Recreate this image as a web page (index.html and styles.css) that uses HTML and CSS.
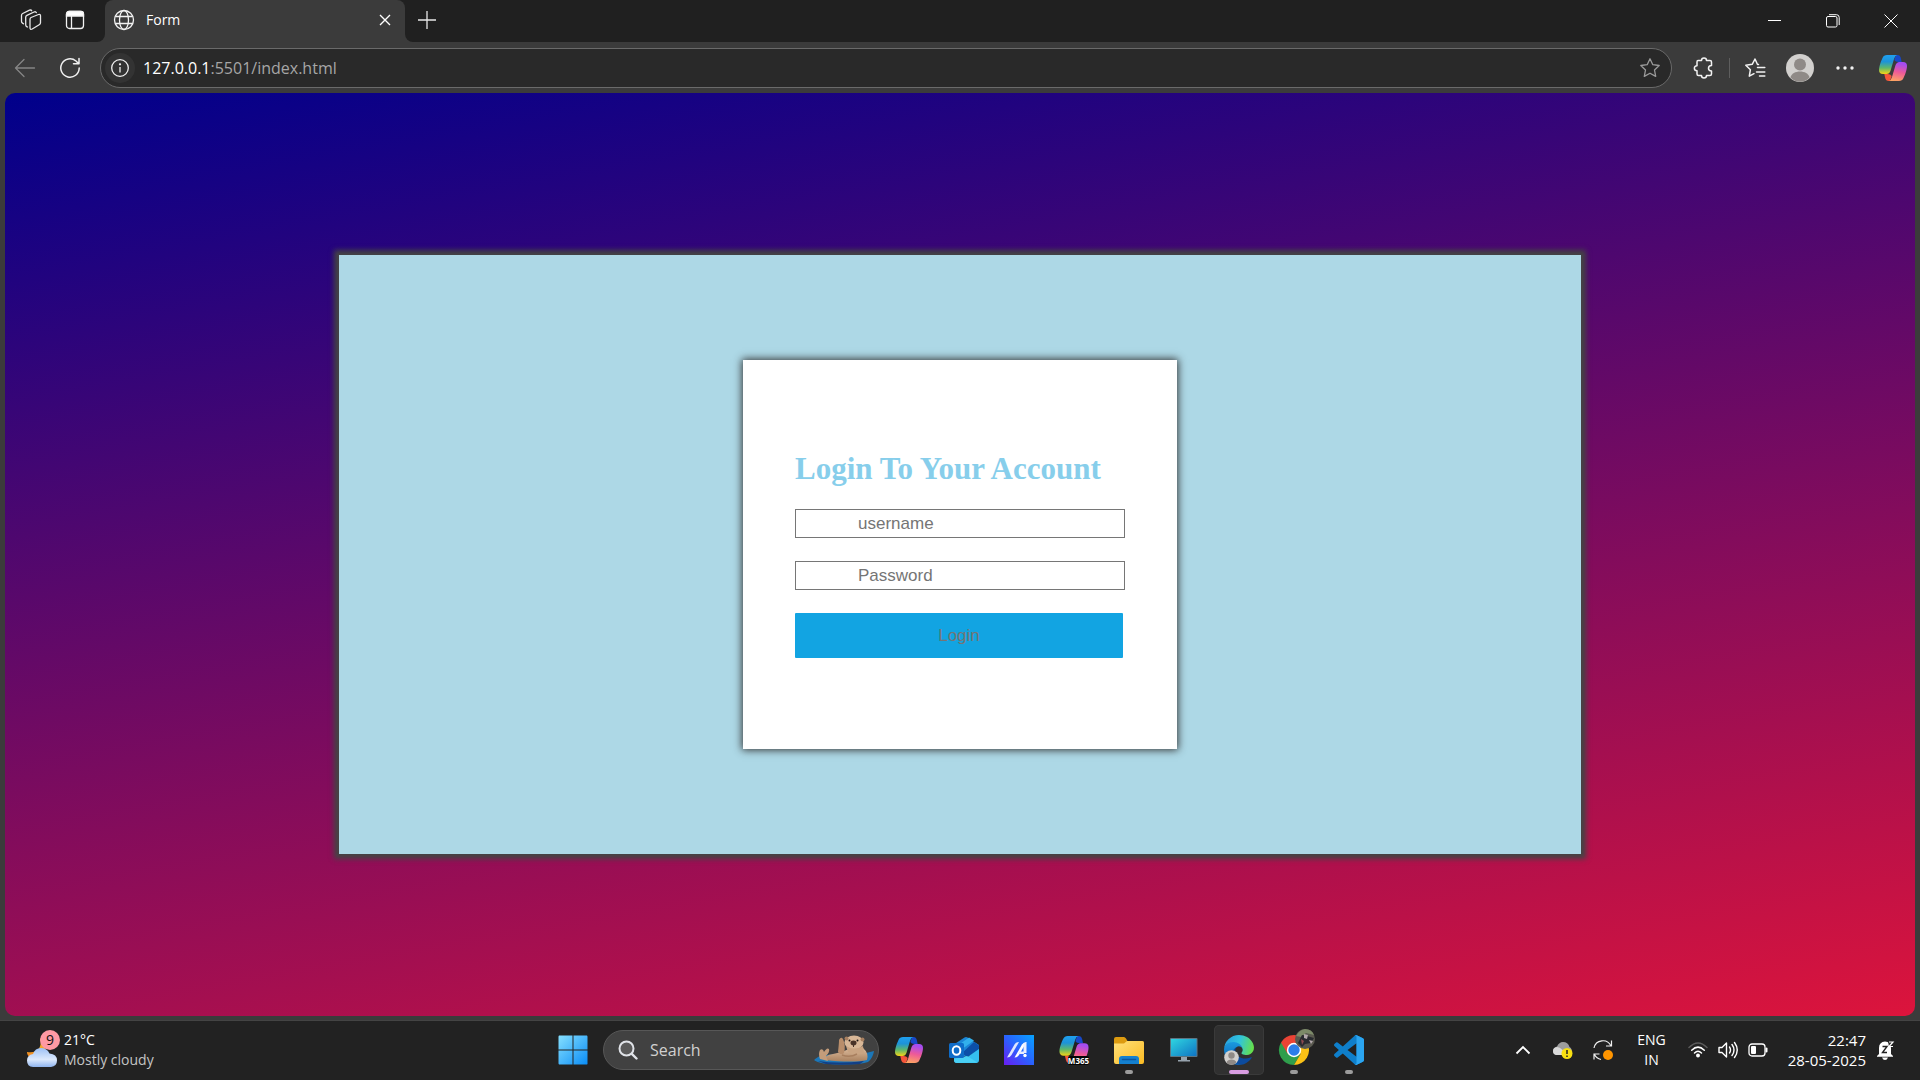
FILE: index.html
```html
<!DOCTYPE html>
<html lang="en">
<head>
<meta charset="utf-8">
<title>Form</title>
<link rel="stylesheet" href="styles.css">
</head>
<body>
<svg class="defs" aria-hidden="true">
  <defs>
    <linearGradient id="cp-left" x1="0" y1="0" x2="0" y2="1">
      <stop offset="0" stop-color="#1fa0f0"/><stop offset=".35" stop-color="#1d93d8"/><stop offset=".68" stop-color="#5fb86a"/><stop offset="1" stop-color="#f5d416"/>
    </linearGradient>
    <linearGradient id="cp-right" x1=".2" y1="0" x2="0" y2="1">
      <stop offset="0" stop-color="#a54cf0"/><stop offset=".45" stop-color="#ee5a98"/><stop offset="1" stop-color="#ffad5c"/>
    </linearGradient>
    <linearGradient id="win" x1="0" y1="0" x2="1" y2="1"><stop offset="0" stop-color="#86e0ff"/><stop offset="1" stop-color="#0a8cf5"/></linearGradient>
    <linearGradient id="asus" x1="0" y1="1" x2="1" y2="0"><stop offset="0" stop-color="#6a1cf2"/><stop offset=".5" stop-color="#2a62ff"/><stop offset="1" stop-color="#06a4ff"/></linearGradient>
    <linearGradient id="folder" x1="0" y1="0" x2="1" y2="1"><stop offset="0" stop-color="#ffe07a"/><stop offset="1" stop-color="#fbbb22"/></linearGradient>
    <linearGradient id="screen" x1="0" y1="0" x2="1" y2="1"><stop offset="0" stop-color="#2fd5e0"/><stop offset="1" stop-color="#0f74c4"/></linearGradient>
    <linearGradient id="edge-top" x1="0" y1=".3" x2="1" y2=".5"><stop offset="0" stop-color="#279fe0"/><stop offset=".5" stop-color="#31c4dc"/><stop offset="1" stop-color="#66e04a"/></linearGradient>
    <linearGradient id="edge-mid" x1="0" y1="0" x2="0" y2="1"><stop offset="0" stop-color="#1b9de2"/><stop offset="1" stop-color="#0b5cb0"/></linearGradient>
    <linearGradient id="cloud" x1="0" y1="0" x2="0" y2="1"><stop offset="0" stop-color="#9cc0f5"/><stop offset=".6" stop-color="#dce9fc"/><stop offset="1" stop-color="#8fb4ee"/></linearGradient>
    <linearGradient id="moon" x1="0" y1="0" x2="0" y2="1"><stop offset="0" stop-color="#f9c433"/><stop offset="1" stop-color="#f0801c"/></linearGradient>
    <linearGradient id="fur" x1="0" y1="0" x2="0" y2="1"><stop offset="0" stop-color="#dcbb9c"/><stop offset="1" stop-color="#a9815f"/></linearGradient>
    <symbol id="copilot" viewBox="0 0 28 26">
      <path d="M17 0h1.500q2.600 0 3.300 3l.9 4h-3.200q-3 0-4.200-2z" fill="#1748c8"/>
      <path d="M11 26H9.500q-2.600 0-3.300-3l-.9-4h3.200q3 0 4.200 2z" fill="#f4553a"/>
      <path d="M8 0h10q-2 .6-3 4l-3.400 11.500Q10.500 19 7.500 19H4Q0 19 0 15C0 11 2.500 5 3.500 3 4.500.8 5.800 0 8 0z" fill="url(#cp-left)"/>
      <path d="M20 26H10q2-.6 3-4l3.400-11.500Q17.500 7 20.500 7H24q4 0 4 4c0 4-2.500 10-3.500 12-1 2.200-2.300 3-4.500 3z" fill="url(#cp-right)"/>
    </symbol>
  </defs>
</svg>

<header class="titlebar">
  <div class="titlebar-left">
    <button class="icon-btn" aria-label="Workspaces">
      <svg width="22" height="22" viewBox="0 0 22 22" fill="none" stroke="#e8e8e8" stroke-width="1.300" stroke-linejoin="round" stroke-linecap="round"><path d="M11 8.500l7.500-3q2-.6 2 1.200v7q0 1.300-1.300 2l-7 4.300q-2.200 1-2.200-1.200V10.200Q10 9 11 8.500zM7.500 18l-.8-.4q-1-.5-1-1.800V8.200q0-1.200 1.200-1.800L14 3q1.800-.7 2.300.6M3.500 14.800l-1-.7q-1-.6-1-1.800V6.500q0-1.400 1.200-2L9.500 1.200q1.700-.6 2.200.6"/></svg>
    </button>
    <button class="icon-btn" aria-label="Tab actions">
      <svg width="20" height="20" viewBox="0 0 20 20" fill="none" stroke="#f2f2f2" stroke-width="1.300"><rect x="1.500" y="1.500" width="17" height="17" rx="3"/><path d="M1.500 6V4q0-2.500 2.500-2.500h12q2.500 0 2.500 2.500v2z" fill="#fff"/><path d="M6.500 6v12"/></svg>
    </button>
  </div>
  <div class="tab">
    <svg width="22" height="22" viewBox="0 0 22 22" fill="none" stroke="#f2f2f2" stroke-width="1.300"><circle cx="11" cy="11" r="9.500"/><ellipse cx="11" cy="11" rx="4.500" ry="9.500"/><path d="M2.300 7.500h17.400M2.300 14.500h17.400"/></svg>
    <span class="tab-title">Form</span>
    <button class="tab-close" aria-label="Close tab">
      <svg width="12" height="12" viewBox="0 0 12 12" stroke="#fff" stroke-width="1.400"><path d="M1 1l10 10M11 1L1 11"/></svg>
    </button>
  </div>
  <div class="titlebar-right">
    <button class="icon-btn" aria-label="New tab">
      <svg width="18" height="18" viewBox="0 0 18 18" stroke="#e8e8e8" stroke-width="1.300"><path d="M9 0v18M0 9h18"/></svg>
    </button>
    <div class="window-controls">
      <button class="window-btn" aria-label="Minimize"><svg width="14" height="14" viewBox="0 0 14 14" stroke="#fff"><path d="M0 6.500h13"/></svg></button>
      <button class="window-btn" aria-label="Restore"><svg width="14" height="14" viewBox="0 0 14 14" fill="none" stroke="#fff"><rect x=".5" y="2.500" width="10.500" height="10.500" rx="1.500"/><path d="M3 .7h7.500q2.700 0 2.700 2.700V11"/></svg></button>
      <button class="window-btn" aria-label="Close"><svg width="14" height="14" viewBox="0 0 14 14" stroke="#fff"><path d="M.5.5l13 13M13.500.5l-13 13"/></svg></button>
    </div>
  </div>
</header>

<nav class="toolbar">
  <button class="icon-btn" aria-label="Back">
    <svg width="22" height="20" viewBox="0 0 22 20" fill="none" stroke="#858585" stroke-width="1.300" stroke-linecap="round" stroke-linejoin="round"><path d="M20.500 10h-19M10 1.500L1.500 10l8.500 8.500"/></svg>
  </button>
  <button class="icon-btn" aria-label="Refresh">
    <svg width="22" height="22" viewBox="0 0 22 22" fill="none" stroke="#f0f0f0" stroke-width="1.500" stroke-linecap="round" stroke-linejoin="round"><path d="M20.200 11A9.200 9.200 0 1 1 17 4l2.500 2.500M20 1.500v5.300h-5.500"/></svg>
  </button>
  <div class="address">
    <button class="site-info" aria-label="Site information">
      <svg width="20" height="20" viewBox="0 0 20 20" fill="none" stroke="#f0f0f0" stroke-width="1.300"><circle cx="10" cy="10" r="8.300"/><path d="M10 9v5.500"/><circle cx="10" cy="6.300" r=".5" fill="#fff"/></svg>
    </button>
    <span class="url"><span class="url-host">127.0.0.1</span>:5501/index.html</span>
    <button class="address-star" aria-label="Add to favorites">
      <svg width="22" height="22" viewBox="0 0 22 22" fill="none" stroke="#9b9b9b" stroke-width="1.300" stroke-linejoin="round"><path d="M11 1.800l2.800 5.900 6.400.8-4.700 4.500 1.200 6.400L11 16.200l-5.700 3.200 1.200-6.400L1.800 8.500l6.400-.8z"/></svg>
    </button>
  </div>
  <div class="toolbar-right">
    <button class="icon-btn" aria-label="Extensions">
      <svg width="22" height="22" viewBox="0 0 22 22" fill="none" stroke="#f2f2f2" stroke-width="1.500" stroke-linejoin="round"><path d="M5 3.500h3.500c0-3.300 5-3.300 5 0H17q1.500 0 1.500 1.500v3.500c-4 .2-4 5.200 0 5.400V17q0 1.500-1.500 1.500h-3.500c0 3.300-5 3.300-5 0H5.500Q4 18.500 4 17v-3.200c-3.500 0-3.500-5 0-5V5q0-1.500 1-1.500z"/></svg>
    </button>
    <span class="divider"></span>
    <button class="icon-btn" aria-label="Favorites">
      <svg width="22" height="22" viewBox="0 0 22 22" fill="none" stroke="#f2f2f2" stroke-width="1.500" stroke-linejoin="round" stroke-linecap="round"><path d="M14.500 7.500h-1L11 2 8.200 7.300l-6.400.9 4.600 4.500-1.100 6.500 4.700-2.500M13.500 10.500h7.300M12.500 15h8.300M15.500 19h5.300"/></svg>
    </button>
    <button class="icon-btn" aria-label="Profile">
      <svg width="28" height="28" viewBox="0 0 28 28"><circle cx="14" cy="14" r="14" fill="#d2d0ce"/><circle cx="14" cy="10.500" r="6" fill="#8f8a87"/><path d="M4.500 23.500C6 15.500 22 15.500 23.500 23.500 18 29.300 10 29.300 4.500 23.500z" fill="#8f8a87"/></svg>
    </button>
    <button class="icon-btn" aria-label="Settings and more">
      <svg width="18" height="4" viewBox="0 0 18 4" fill="#f2f2f2"><circle cx="2" cy="2" r="1.700"/><circle cx="9" cy="2" r="1.700"/><circle cx="16" cy="2" r="1.700"/></svg>
    </button>
    <button class="icon-btn sidebar-btn" aria-label="Copilot"><svg width="28" height="26"><use href="#copilot"/></svg></button>
  </div>
</nav>

<main class="page">
  <section class="panel">
    <div class="card">
      <form class="login">
        <h1 class="login-title">Login To Your Account</h1>
        <input class="field" type="text" placeholder="username" aria-label="username">
        <input class="field" type="password" placeholder="Password" aria-label="Password">
        <button class="submit" type="button">Login</button>
      </form>
    </div>
  </section>
</main>

<footer class="taskbar">
  <button class="weather">
    <span class="weather-icon">
      <svg width="32" height="36" viewBox="0 0 32 36"><path d="M14 6c3 9-3 16-13 14 0 6 8 9 14 5s6-14-1-19z" fill="url(#moon)"/><path d="M7 35q-6-.5-6-6.500 0-5.500 6-6.500 2-6 8-6t8.500 5.500Q31 22 31 28.500 31 34 25 35z" fill="url(#cloud)"/></svg>
      <span class="weather-badge">9</span>
    </span>
    <span class="weather-text"><span class="bright">21°C</span><span>Mostly cloudy</span></span>
  </button>

  <div class="apps">
    <button class="app" aria-label="Start">
      <svg width="50" height="50" viewBox="0 0 50 50" fill="url(#win)"><path d="M11 10.500h13.500v14H10.500v-13zM25.500 10.500H39l.5 1v13h-14zM10.500 25.500h14v14H11l-.5-1zM25.500 25.500h14v13.500l-.5.5H25.500z"/></svg>
    </button>
    <label class="search">
      <svg width="20" height="20" viewBox="0 0 20 20" fill="none" stroke="#e0e3e8" stroke-width="2" stroke-linecap="round"><circle cx="8.500" cy="8.500" r="7" fill="#5a5a5a"/><path d="M13.800 13.800l4.700 4.700" stroke-width="2.400"/></svg>
      <input class="search-input" type="text" placeholder="Search">
      <svg class="otter" width="60" height="30" viewBox="0 0 60 30">
        <path d="M0 25q4-4 10-5l42-2 8-2q-1 7-6 11-6 2.500-25 2.500Q5 29.500 0 25z" fill="#1c77b8"/>
        <path d="M4 26q20 3 46 0l-4 3q-18 1.500-34 0z" fill="#123f86"/>
        <path d="M11 25q-1-5 8-6 8-1 16-5l14-1q6 5 4 12-14 3-42 0z" fill="url(#fur)"/>
        <path d="M6 24q-2-5 0-9 3-2 4 2 3-5 5-3 1 3-3 7l2 5z" fill="#c39c7a"/>
        <path d="M24 17q1-9 1-12 2-4 4-1 3 7 1 14-3 3-6-1z" fill="#b98e6b"/>
        <ellipse cx="40" cy="7.500" rx="9.500" ry="7" fill="#d8b797"/>
        <circle cx="32.500" cy="3.500" r="2" fill="#a67f60"/><circle cx="48.500" cy="4.500" r="2" fill="#a67f60"/>
        <path d="M32 11q8 5 17 0l1 7q-9 4-16-1z" fill="#c9a482"/>
        <ellipse cx="39.500" cy="8" rx="3" ry="2.400" fill="#493328"/><circle cx="35.500" cy="5.500" r="1" fill="#1c1512"/><circle cx="43.500" cy="5.500" r="1" fill="#1c1512"/>
        <path d="M39.500 9v3" stroke="#493328"/>
        <path d="M28 20q8 3 15-1" fill="none" stroke="#a87f5e" stroke-width="1.500"/>
      </svg>
    </label>
    <button class="app" aria-label="Copilot"><svg width="28" height="26"><use href="#copilot"/></svg></button>
    <button class="app" aria-label="Outlook">
      <svg width="50" height="50" viewBox="0 0 50 50"><path d="M14 20l11.500-7.500q1.500-.8 3 0L40 20v5L27 32 14 25z" fill="#1b86d6"/><path d="M18 21l12-8.500 5 3-14 10z" fill="#32b0ec"/><path d="M23 28l12-11 5 3.500v4L28 32z" fill="#0c4fa8"/><path d="M15 29l12 4 13-9v11q0 3-3 3H18q-3 0-3-3z" fill="#35bff0"/><path d="M15 34l13-3 10.500 6.500L18 38q-3 0-3-3z" fill="#4ad0f5"/><rect x="10" y="18" width="15" height="15" rx="1.500" fill="#0f6cc8"/><ellipse cx="17.500" cy="25.500" rx="3.800" ry="4.300" fill="none" stroke="#fff" stroke-width="2"/></svg>
    </button>
    <button class="app" aria-label="MyASUS">
      <svg width="50" height="50" viewBox="0 0 50 50"><rect x="10" y="10" width="30" height="30" fill="url(#asus)"/><path d="M13 32.500l7.500-13q1.500-2.500 4.500-2.500l-7.500 13q-1.500 2.500-4.500 2.500z" fill="#dfe6ff"/><path d="M20.500 32.500l7.500-13q1.500-2.500 4.500-2.500l-7.500 13q-1.500 2.500-4.500 2.500z" fill="#fff"/><path d="M29.500 19l3-2v11h-3zM25.500 26.500h4.500V29h-6z" fill="#e9eeff"/><circle cx="31" cy="30.500" r="1.700" fill="#fff"/></svg>
    </button>
    <button class="app" aria-label="Microsoft 365 Copilot">
      <svg width="50" height="50" viewBox="0 0 50 50"><use href="#copilot" x="10" y="11" width="30" height="27"/><rect x="19" y="31" width="21" height="9" rx="2" fill="#050505"/><text x="29.500" y="38.500" class="app-tag">M365</text></svg>
    </button>
    <button class="app" aria-label="File Explorer">
      <svg width="50" height="50" viewBox="0 0 50 50"><path d="M10 21v-7q0-2 2-2h8q1 0 2 1.500l1.500 2.500H38q2 0 2 2v3z" fill="#dd9b10"/><path d="M10 18.500h10l3-2.500h15q2 0 2 2v19q0 2-2 2H12q-2 0-2-2z" fill="url(#folder)"/><path d="M15 39v-5q0-3 3-3h14q3 0 3 3v5z" fill="#1480cf"/><path d="M18.500 34.500h13" stroke="#0a55a0" stroke-width="1.500" stroke-linecap="round"/><rect x="21" y="45" width="8" height="4" rx="2" fill="#9c9c9c"/></svg>
    </button>
    <button class="app" aria-label="Remote Desktop">
      <svg width="50" height="50" viewBox="0 0 50 50"><path d="M22 32h6v3h3v1.500H19V35h3z" fill="#97a3ad"/><rect x="11" y="13" width="27.500" height="19" rx="1" fill="#5c7583"/><rect x="12" y="14" width="25.500" height="17" fill="url(#screen)"/></svg>
    </button>
    <button class="app app-active" aria-label="Microsoft Edge">
      <svg width="50" height="50" viewBox="0 0 50 50"><g transform="translate(10 10) scale(.117)"><path fill="#0c4b9e" d="M231.070 190.540c-3.400 1.770-6.920 3.330-10.540 4.670a101.940 101.940 0 0 1-35.900 6.460c-47.320 0-88.540-32.550-88.540-74.320a31.480 31.480 0 0 1 16.430-27.310c-42.800 1.800-53.800 46.400-53.800 72.530 0 73.880 68.090 81.370 82.760 81.370 7.910 0 19.840-2.300 27-4.560l1.310-.44A128.340 128.340 0 0 0 236.900 195c.44-.7.7-1.600-.3-2.800-1.400-1.900-3.600-2.600-5.530-1.660z"/><path fill="url(#edge-mid)" d="M105.730 241.420a79.200 79.200 0 0 1-22.740-21.340 80.720 80.720 0 0 1 29.530-120c3.120-1.470 8.450-4.130 15.540-4a32.350 32.350 0 0 1 25.690 13 31.880 31.880 0 0 1 6.360 18.660c0-.21 24.460-79.600-80-79.600-43.900 0-80 41.660-80 78.210a130.150 130.150 0 0 0 12.110 56 128 128 0 0 0 156.380 67.110 75.550 75.550 0 0 1-62.780-8z"/><path fill="url(#edge-top)" d="M152.330 148.860c-.81 1.050-3.300 2.500-3.300 5.660 0 2.610 1.700 5.120 4.720 7.230 14.380 10 41.490 8.680 41.560 8.680a59.560 59.560 0 0 0 30.270-8.350 61.380 61.380 0 0 0 30.430-52.880c.26-22.410-8-37.310-11.340-43.910C223.460 23.840 177.720 0 128 0A128 128 0 0 0 0 126.200c.48-36.540 36.800-66.050 80-66.050 3.500 0 23.460.34 42 10.070 16.340 8.580 24.900 18.940 30.850 29.210 6.180 10.670 7.280 24.150 7.280 29.520s-2.740 13.330-7.800 19.910z"/></g><circle cx="17.500" cy="32.500" r="7.300" fill="#d2d0ce"/><circle cx="17.500" cy="30.500" r="3.200" fill="#8f8a87"/><path d="M12.500 37.500c1-4 9-4 10 0-3 3-7 3-10 0z" fill="#8f8a87"/><rect x="15" y="45" width="20" height="4" rx="2" fill="#d99de2"/></svg>
    </button>
    <button class="app" aria-label="Google Chrome">
      <svg width="50" height="50" viewBox="0 0 50 50"><path d="M25 25L12 17.500a15 15 0 0 1 26 0z" fill="#ea4335"/><path d="M25 25L12 17.500A15 15 0 0 0 25 40l6.500-11z" fill="#2f9e4c"/><path d="M25 18h13.300A15 15 0 0 1 25 40l6.500-11z" fill="#fbc116"/><path d="M12 17.500h13V25l-6.500 3.500z" fill="#ea4335"/><circle cx="25" cy="25" r="7.200" fill="#fff"/><circle cx="25" cy="25" r="5.700" fill="#2b7de9"/><circle cx="36" cy="14" r="10" fill="#59594f"/><path d="M27 11q3-6 9-7 7 0 9 6l-8-2-5 4z" fill="#7c8a68"/><path d="M29 18l4-8 5 1 7 2-3 5-6 1-3 3z" fill="#292b30"/><path d="M35 9l4 1-1 4-3-1zM40 15l4 1-2 3z" fill="#b2a8ab"/><path d="M32 14l3 2-2 4z" fill="#8f4b50"/><rect x="21" y="45" width="8" height="4" rx="2" fill="#9c9c9c"/></svg>
    </button>
    <button class="app" aria-label="Visual Studio Code">
      <svg width="50" height="50" viewBox="0 0 50 50"><g transform="translate(10 10) scale(1.250)"><path fill="#0f7fcb" d="M23.150 2.587L18.210.21a1.494 1.494 0 0 0-1.705.29l-9.460 8.630-4.120-3.128a.999.999 0 0 0-1.276.057L.327 7.261A1 1 0 0 0 .326 8.740L3.899 12 .326 15.260a1 1 0 0 0 .001 1.479L1.650 17.940a.999.999 0 0 0 1.276.057l4.120-3.128 9.460 8.630a1.492 1.492 0 0 0 1.704.29l4.942-2.377A1.500 1.500 0 0 0 24 20.060V3.939a1.500 1.500 0 0 0-.85-1.352zm-5.146 14.861L10.826 12l7.178-5.448v10.896z"/><path fill="#2ba5f0" d="M18.200.2l4.950 2.387q.85.400.85 1.352V20.060q0 .95-.85 1.350L18.200 23.790q-.9.400-1.700-.3 1.500.5 1.500-1V1.500q0-1.500-1.500-1 .8-.7 1.700-.3z"/></g><rect x="21" y="45" width="8" height="4" rx="2" fill="#9c9c9c"/></svg>
    </button>
  </div>

  <div class="tray">
    <button class="tray-btn" aria-label="Show hidden icons"><svg width="16" height="10" viewBox="0 0 16 10" fill="none" stroke="#fff" stroke-width="1.800"><path d="M1.500 8.500L8 2l6.500 6.500"/></svg></button>
    <button class="tray-btn" aria-label="OneDrive"><svg width="22" height="20" viewBox="0 0 22 20"><path d="M5 15q-4-.5-4-4t4-4.500Q7 2 11 2q5 0 6.500 5 3 1 2.500 8z" fill="#9d9d9d"/><path d="M4 15q-3-.5-3-4t4-4q3 0 5 2.500L15 15z" fill="#d9d9d9"/><circle cx="15" cy="13.500" r="5.500" fill="#f8e011"/><path d="M15 10v4M15 15.500v1.500" stroke="#222" stroke-width="1.500"/></svg></button>
    <button class="tray-btn" aria-label="Updates"><svg width="22" height="22" viewBox="0 0 22 22" fill="none" stroke="#f0f0f0" stroke-width="1.200"><path d="M2 9a9 9 0 0 1 17-2M19.500 1.500V7H14M9 20.500q-4.500-1-6.500-5M2 20.500V15h5.500"/><circle cx="16" cy="16" r="5" fill="#ff9500" stroke="none"/></svg></button>
    <button class="language"><span>ENG</span><span>IN</span></button>
    <button class="quick" aria-label="Quick settings">
      <svg width="20" height="20" viewBox="0 0 20 20" fill="none" stroke="#fff" stroke-width="1.500" stroke-linecap="round"><path d="M1 7.500q9-9 18 0" stroke="#5c5c5c"/><path d="M3.700 10.300q6.300-6.300 12.600 0M6.500 13q3.500-3.500 7 0"/><circle cx="10" cy="15.500" r="1.200" fill="#fff"/></svg>
      <svg width="20" height="20" viewBox="0 0 20 20" fill="none" stroke="#fff" stroke-width="1.400" stroke-linecap="round" stroke-linejoin="round"><path d="M1 7.500h3L8.500 3v14L4 12.500H1zM11.500 7q2 3 0 6M14 4.500q4 5.500 0 11M16.500 2.500q5.500 7.500 0 15"/></svg>
      <svg width="20" height="20" viewBox="0 0 20 20" fill="none" stroke="#fff" stroke-width="1.300"><rect x="1" y="4" width="16" height="12" rx="3"/><rect x="3" y="6" width="5" height="8" rx="1" fill="#fff" stroke="none"/><path d="M18.500 8.500v3" stroke-width="2" stroke-linecap="round"/></svg>
    </button>
    <button class="clock"><span>22:47</span><span>28-05-2025</span></button>
    <button class="bell" aria-label="Notifications"><svg width="20" height="20" viewBox="0 0 20 20"><path d="M3 14V8q0-6 6-6.500 6 .5 6 6.500v6l2 2v.7H1V16zM6 17.500h6q-1 2.500-3 2.500t-3-2.500z" fill="#fff"/><path d="M6.500 6.500h4.500l-4.500 6H11" fill="none" stroke="#222" stroke-width="1.400"/><path d="M12 1h6v6h-5z" fill="#222"/><path d="M13 2h4l-4 4.500h4" fill="none" stroke="#fff" stroke-width="1.200"/></svg></button>
  </div>
</footer>
</body>
</html>
```

FILE: styles.css
```css
* {
  box-sizing: border-box;
}

body {
  margin: 0;
  height: 100vh;
  display: flex;
  flex-direction: column;
  overflow: hidden;
  background: #3b3b3b;
  color: #fff;
  font-family: "Open Sans", "Noto Sans", sans-serif;
  font-size: 14px;
}

button {
  margin: 0;
  padding: 0;
  border: 0;
  background: none;
  color: inherit;
  font: inherit;
}

svg {
  display: block;
  flex: none;
}

.defs {
  position: absolute;
  width: 0;
  height: 0;
}

.icon-btn {
  flex: none;
  width: 44px;
  height: 40px;
  display: grid;
  place-items: center;
}

/* Title bar: the lower half shows through the rounded ends beside the tab */
.titlebar {
  flex: none;
  display: flex;
  height: 42px;
  background: linear-gradient(#202020 50%, #3b3b3b 50%);
}

.titlebar-left {
  flex: none;
  width: 105px;
  padding-left: 9px;
  display: flex;
  background: #202020;
  border-bottom-right-radius: 8px;
}

.tab {
  flex: none;
  width: 300px;
  display: flex;
  align-items: center;
  gap: 11px;
  padding: 0 14px 3px 8px;
  background: #3b3b3b;
  border-radius: 8px 8px 0 0;
}

.tab-title {
  flex: 1;
}

.tab-close {
  flex: none;
}

.titlebar-right {
  flex: 1;
  display: flex;
  justify-content: space-between;
  background: #202020;
  border-bottom-left-radius: 8px;
}

.window-controls {
  display: flex;
}

.window-btn {
  width: 58px;
  height: 42px;
  display: grid;
  place-items: center;
}

/* Toolbar */
.toolbar {
  flex: none;
  height: 51px;
  display: flex;
  align-items: center;
  gap: 1px;
  padding: 0 5px 0 3px;
}

.address {
  flex: 1;
  min-width: 0;
  height: 40px;
  margin: 0 9px 0 7px;
  padding: 0 10px 0 4px;
  display: flex;
  align-items: center;
  gap: 8px;
  background: #292929;
  border: 1px solid #6a6a6a;
  border-radius: 20px;
}

.site-info {
  flex: none;
  width: 30px;
  height: 30px;
  display: grid;
  place-items: center;
  background: #333;
  border-radius: 50%;
}

.url {
  flex: 1;
  color: #a6a6a6;
  font-size: 16px;
}

.url-host {
  color: #fff;
}

.toolbar-right {
  flex: none;
  display: flex;
  align-items: center;
  gap: 1px;
}

.sidebar-btn {
  margin-left: 3px;
}

.divider {
  width: 1px;
  height: 20px;
  margin: 0 2px;
  background: #5e5e5e;
}

/* Page content */
.page {
  flex: 1;
  min-height: 0;
  margin: 0 5px 4px;
  display: grid;
  place-items: center;
  border-radius: 10px;
  background: linear-gradient(170deg, #00008b, #dc143c);
}

.panel {
  width: 65%;
  height: 65%;
  display: grid;
  place-items: center;
  background: #add8e6;
  box-shadow: 0 0 5px 5px #444;
}

.card {
  width: 35%;
  height: 65%;
  display: grid;
  place-items: center;
  background: #fff;
  box-shadow: 0 0 8px 1px #333;
}

.login {
  width: 330px;
  display: flex;
  flex-direction: column;
  align-items: flex-start;
  gap: 23px;
}

.login-title {
  margin: 0;
  color: #87ceeb;
  font: bold 31px/35px "Liberation Serif", serif;
  white-space: nowrap;
}

.field {
  width: 100%;
  height: 29px;
  padding: 2px 4px 0 62px;
  border: 1px solid #767676;
  background: #fff;
  color: #000;
  font: 17px "Liberation Sans", sans-serif;
}

.field::placeholder {
  color: #757575;
}

.submit {
  width: 328px;
  height: 45px;
  padding-top: 2px;
  border-radius: 1px;
  background: #12a4e2;
  color: #757575;
  font: 17px "Liberation Sans", sans-serif;
}

/* Taskbar */
.taskbar {
  flex: none;
  height: 60px;
  display: grid;
  grid-template-columns: 1fr auto 1fr;
  align-items: center;
  padding: 0 24px 2px 26px;
  background: #222;
  border-top: 1px solid #444;
}

.weather {
  justify-self: start;
  display: flex;
  align-items: center;
  gap: 6px;
  text-align: left;
}

.weather-icon {
  position: relative;
}

.weather-badge {
  position: absolute;
  top: -2px;
  right: -2px;
  width: 20px;
  height: 20px;
  border-radius: 50%;
  background: #ff99a4;
  color: #111;
  line-height: 20px;
  text-align: center;
}

.weather-text,
.language,
.clock {
  display: flex;
  flex-direction: column;
  line-height: 20px;
}

.weather-text {
  color: #c4c4c4;
}

.bright {
  color: #fff;
}

.apps {
  display: flex;
  align-items: center;
  gap: 5px;
}

.app {
  width: 50px;
  height: 50px;
  display: grid;
  place-items: center;
  border-radius: 5px;
}

.app-active {
  background: #303030;
  box-shadow: inset 0 0 0 1px #3a3a3a;
}

.app-tag {
  fill: #fff;
  font: bold 8px "Open Sans", sans-serif;
  text-anchor: middle;
}

.search {
  width: 276px;
  height: 40px;
  display: flex;
  align-items: center;
  gap: 12px;
  padding: 0 4px 0 14px;
  background: #414141;
  border: 1px solid #575757;
  border-radius: 20px;
}

.search-input {
  flex: 1;
  min-width: 0;
  padding: 0;
  border: 0;
  background: none;
  color: #fff;
  font: 16px "Open Sans", "Noto Sans", sans-serif;
}

.search-input::placeholder {
  color: #d0d0d0;
}

.tray {
  justify-self: end;
  display: flex;
  align-items: center;
}

.tray-btn {
  width: 40px;
  height: 40px;
  display: grid;
  place-items: center;
}

.language {
  margin: 0 22px 0 14px;
  align-items: center;
}

.quick {
  display: flex;
  gap: 10px;
}

.clock {
  margin: 0 10px 0 20px;
  align-items: flex-end;
  font-size: 15px;
}
```
